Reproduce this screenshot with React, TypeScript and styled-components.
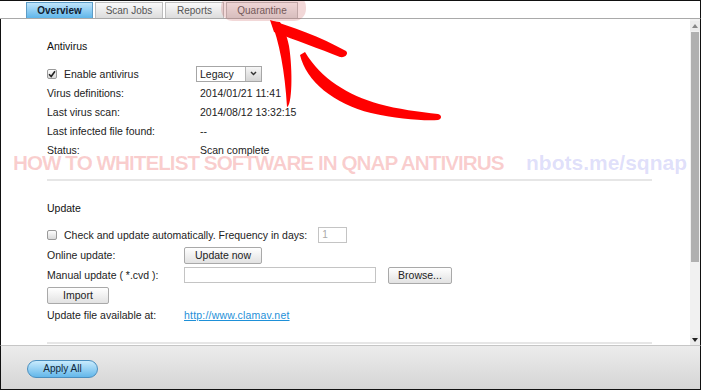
import styled, { createGlobalStyle } from "styled-components";

const Global = createGlobalStyle`
	html, body {
		margin: 0;
		padding: 0;
		background: #fff;
	}
	body {
		font-family: "Liberation Sans", Arial, sans-serif;
		font-size: 10.5px;
		color: #222;
	}
`;

const Frame = styled.div`
	position: relative;
	width: 701px;
	height: 391px;
	box-sizing: border-box;
	border-top: 1px solid #111;
	background: #fff;
	overflow: hidden;
`;

const TabBar = styled.div`
	display: flex;
	align-items: flex-end;
	gap: 2px;
	height: 17px;
	padding-left: 26px;
	border-bottom: 1px solid #a9a9a9;
	border-right: 1px solid #111;
`;

const Tab = styled.div<{ $w: number; $active?: boolean }>`
	width: ${(p) => p.$w}px;
	height: 16px;
	box-sizing: border-box;
	display: flex;
	align-items: center;
	justify-content: center;
	font-size: 10px;
	border: 1px solid ${(p) => (p.$active ? "#5d9cc6" : "#bdbdbd")};
	border-bottom: none;
	color: ${(p) => (p.$active ? "#102030" : "#555")};
	font-weight: ${(p) => (p.$active ? "bold" : "normal")};
	background: ${(p) =>
		p.$active
			? "linear-gradient(#bfe4fb, #5fb6ea)"
			: "linear-gradient(#fafafa, #dcdcdc)"};
`;

const Highlight = styled.div`
	position: absolute;
	left: 221px;
	top: -6px;
	width: 85px;
	height: 26px;
	border-radius: 12px;
	background: rgba(205, 100, 100, 0.25);
`;

const Body = styled.div`
	display: flex;
	height: 326px;
	border-left: 1px solid #111;
	border-right: 1px solid #111;
`;

const Content = styled.div`
	flex: 1;
	padding: 19px 38px 0 46px;
	display: flex;
	flex-direction: column;
`;

const Heading = styled.div<{ $gap?: number }>`
	height: 16px;
	line-height: 16px;
	color: #111;
	margin-top: ${(p) => p.$gap ?? 0}px;
`;

const Rows = styled.div<{ $label: number; $row: number; $gap: number }>`
	display: grid;
	grid-template-columns: ${(p) => p.$label}px 1fr;
	grid-auto-rows: ${(p) => p.$row}px;
	align-items: center;
	margin-top: ${(p) => p.$gap}px;
`;

const Wide = styled.div`
	grid-column: 1 / -1;
	display: flex;
	align-items: center;
`;

const CheckLine = styled.div`
	display: flex;
	align-items: center;
`;

const Inline = styled.div`
	display: flex;
	align-items: center;
	gap: 12px;
`;

const Box = styled.span`
	width: 10px;
	height: 10px;
	box-sizing: border-box;
	margin-right: 7px;
	border: 1px solid #9a9a9a;
	border-radius: 2px;
	background: linear-gradient(#fdfdfd, #d9d9d9);
	display: flex;
	align-items: center;
	justify-content: center;
`;

const Select = styled.div`
	margin-left: -4px;
	width: 66px;
	height: 16px;
	box-sizing: border-box;
	border: 1px solid #a6a6a6;
	display: flex;
	align-items: center;
	padding-left: 3px;
	background: #fff;
`;

const SelectText = styled.span`
	flex: 1;
`;

const SelectButton = styled.span`
	width: 15px;
	height: 14px;
	border-left: 1px solid #b4b4b4;
	background: linear-gradient(#f6f6f6, #d4d4d4);
	display: flex;
	align-items: center;
	justify-content: center;
`;

const Field = styled.div<{ $w: number; $gap?: number }>`
	width: ${(p) => p.$w}px;
	height: 16px;
	box-sizing: border-box;
	margin-left: ${(p) => p.$gap ?? 0}px;
	border: 1px solid #c4c4c4;
	background: #fff;
	color: #aaa;
	font-size: 10px;
	padding-left: 3px;
	line-height: 14px;
`;

const Button = styled.div<{ $w: number }>`
	width: ${(p) => p.$w}px;
	height: 17px;
	box-sizing: border-box;
	border: 1px solid #a9a9a9;
	border-radius: 2px;
	background: linear-gradient(#ffffff, #e2e2e2);
	display: flex;
	align-items: center;
	justify-content: center;
	color: #222;
`;

const Link = styled.a`
	color: #1e90d8;
	text-decoration: underline;
	letter-spacing: 0.2px;
`;

const Divider = styled.div<{ $gap: number }>`
	height: 2px;
	background: #e6e6e6;
	margin-top: ${(p) => p.$gap}px;
`;

const Scrollbar = styled.div`
	width: 10px;
	display: flex;
	flex-direction: column;
	background: #f1f1f1;
	padding-top: 2px;
`;

const ScrollArrow = styled.div`
	height: 10px;
	display: flex;
	align-items: center;
	justify-content: center;
	background: #ececec;
`;

const Thumb = styled.div`
	height: 230px;
	margin: 1px 1px 0;
	background: #b0b0b0;
`;

const Track = styled.div`
	flex: 1;
`;

const Footer = styled.div`
	height: 43px;
	border-top: 1px solid #c6c6c6;
	border-bottom: 1px solid #111;
	border-left: 1px solid #111;
	border-right: 1px solid #111;
	background: linear-gradient(#ececec, #d5d5d5);
	display: flex;
	align-items: center;
	padding-left: 26px;
`;

const ApplyButton = styled.div`
	width: 71px;
	height: 18px;
	box-sizing: border-box;
	border: 1px solid #4b8fbf;
	border-radius: 9px;
	background: linear-gradient(#c9ebfd, #63b7ea);
	display: flex;
	align-items: center;
	justify-content: center;
	font-size: 10px;
	color: #10283a;
	margin-top: 2px;
`;

const Watermark = styled.div`
	position: absolute;
	left: 13px;
	top: 150px;
	display: flex;
	align-items: baseline;
	pointer-events: none;
	white-space: nowrap;
`;

const MarkTitle = styled.span`
	font-weight: bold;
	font-size: 21px;
	letter-spacing: -1px;
	color: rgba(230, 30, 30, 0.22);
	display: inline-block;
	transform: scaleX(0.985);
	transform-origin: left;
	width: 502px;
`;

const MarkUrl = styled.span`
	font-size: 21px;
	font-weight: bold;
	color: rgba(90, 90, 230, 0.2);
	margin-left: 11px;
`;

const Arrow = styled.svg`
	position: absolute;
	left: 0;
	top: 0;
	pointer-events: none;
`;

const Check = () => (
	<svg width="8" height="8" viewBox="0 0 8 8">
		<path d="M1 4.2 L3.2 6.5 L7 1.2" fill="none" stroke="#222" strokeWidth="1.6" />
	</svg>
);

const Chevron = () => (
	<svg width="7" height="5" viewBox="0 0 7 5">
		<path d="M1 1 L3.5 3.6 L6 1" fill="none" stroke="#333" strokeWidth="1.4" />
	</svg>
);

const Triangle = ({ down }: { down?: boolean }) => (
	<svg width="6" height="4" viewBox="0 0 6 4">
		<path d={down ? "M0 0 H6 L3 4 Z" : "M0 4 H6 L3 0 Z"} fill={down ? "#222" : "#888"} />
	</svg>
);

export default function App() {
	return (
		<>
			<Global />
			<Frame>
				<TabBar>
					<Tab $w={67} $active>Overview</Tab>
					<Tab $w={68}>Scan Jobs</Tab>
					<Tab $w={59}>Reports</Tab>
					<Tab $w={72}>Quarantine</Tab>
				</TabBar>
				<Highlight />
				<Body>
					<Content>
						<Heading>Antivirus</Heading>
						<Rows $label={153} $row={19} $gap={10}>
							<CheckLine>
								<Box>
									<Check />
								</Box>
								Enable antivirus
							</CheckLine>
							<Select>
								<SelectText>Legacy</SelectText>
								<SelectButton>
									<Chevron />
								</SelectButton>
							</Select>
							<span>Virus definitions:</span>
							<span>2014/01/21 11:41</span>
							<span>Last virus scan:</span>
							<span>2014/08/12 13:32:15</span>
							<span>Last infected file found:</span>
							<span>--</span>
							<span>Status:</span>
							<span>Scan complete</span>
						</Rows>
						<Divider $gap={20} />
						<Heading $gap={19}>Update</Heading>
						<Rows $label={137} $row={20} $gap={9}>
							<Wide>
								<Box />
								Check and update automatically. Frequency in days:
								<Field $w={29} $gap={11}>
									1
								</Field>
							</Wide>
							<span>Online update:</span>
							<div>
								<Button $w={78}>Update now</Button>
							</div>
							<span>Manual update ( *.cvd ):</span>
							<Inline>
								<Field $w={192} />
								<Button $w={64}>Browse...</Button>
							</Inline>
							<Wide>
								<Button $w={62}>Import</Button>
							</Wide>
							<span>Update file available at:</span>
							<span>
								<Link href="#">http://www.clamav.net</Link>
							</span>
						</Rows>
						<Divider $gap={17} />
					</Content>
					<Scrollbar>
						<ScrollArrow>
							<Triangle />
						</ScrollArrow>
						<Thumb />
						<Track />
						<ScrollArrow>
							<Triangle down />
						</ScrollArrow>
					</Scrollbar>
				</Body>
				<Footer>
					<ApplyButton>Apply All</ApplyButton>
				</Footer>
				<Watermark>
					<MarkTitle>HOW TO WHITELIST SOFTWARE IN QNAP ANTIVIRUS</MarkTitle>
					<MarkUrl>nbots.me/sqnap</MarkUrl>
				</Watermark>
				<Arrow width="701" height="391" viewBox="0 0 701 391">
					<path
						d="M271 20 C279 40 285 70 287 106 C292 105 293 70 289 45 C287 35 284 28 280 21 Z"
						fill="#f00"
					/>
					<path
						d="M270 19 C290 25 321 36 346 50 C349 53 345 57 340 56 C320 48 295 39 274 31 Z"
						fill="#f00"
					/>
					<path
						d="M300 54 C306 80 334 103 371 112 C397 118 424 120 438 119 C442 118 442 114 438 113 C420 111 397 108 379 103 C348 94 321 78 305 51 Z"
						fill="#f00"
					/>
				</Arrow>
			</Frame>
		</>
	);
}
